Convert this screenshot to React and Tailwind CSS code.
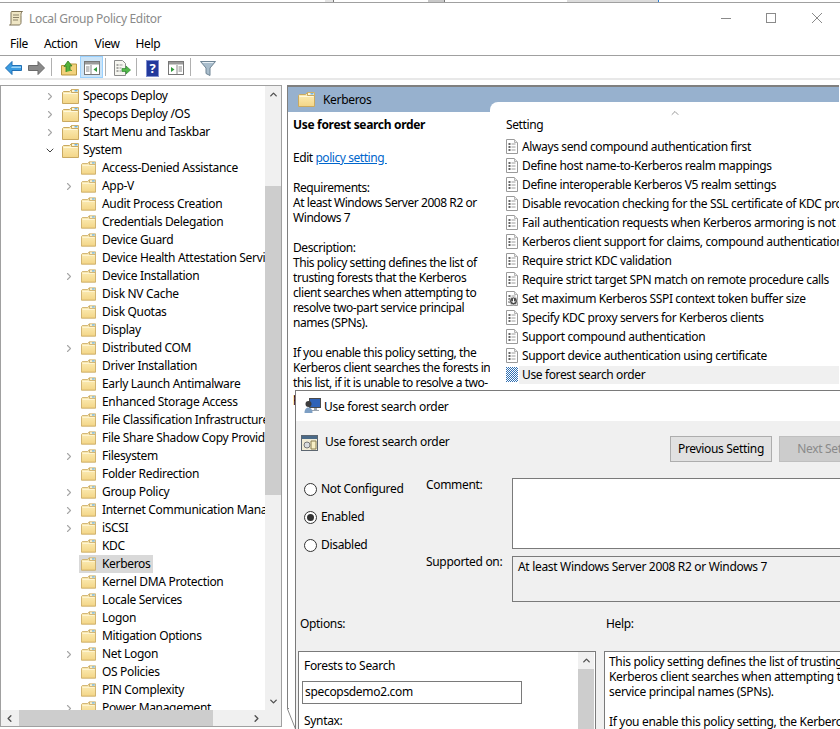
import { ChevronRight, ChevronDown, ChevronUp, ChevronLeft } from 'lucide-react'

const TREE = [
  { label: 'Specops Deploy', level: 1, arrow: 'right' },
  { label: 'Specops Deploy /OS', level: 1, arrow: 'right' },
  { label: 'Start Menu and Taskbar', level: 1, arrow: 'right' },
  { label: 'System', level: 1, arrow: 'down' },
  { label: 'Access-Denied Assistance', level: 2 },
  { label: 'App-V', level: 2, arrow: 'right' },
  { label: 'Audit Process Creation', level: 2 },
  { label: 'Credentials Delegation', level: 2 },
  { label: 'Device Guard', level: 2 },
  { label: 'Device Health Attestation Service', level: 2 },
  { label: 'Device Installation', level: 2, arrow: 'right' },
  { label: 'Disk NV Cache', level: 2 },
  { label: 'Disk Quotas', level: 2 },
  { label: 'Display', level: 2 },
  { label: 'Distributed COM', level: 2, arrow: 'right' },
  { label: 'Driver Installation', level: 2 },
  { label: 'Early Launch Antimalware', level: 2 },
  { label: 'Enhanced Storage Access', level: 2 },
  { label: 'File Classification Infrastructure', level: 2 },
  { label: 'File Share Shadow Copy Provider', level: 2 },
  { label: 'Filesystem', level: 2, arrow: 'right' },
  { label: 'Folder Redirection', level: 2 },
  { label: 'Group Policy', level: 2, arrow: 'right' },
  { label: 'Internet Communication Management', level: 2, arrow: 'right' },
  { label: 'iSCSI', level: 2, arrow: 'right' },
  { label: 'KDC', level: 2 },
  { label: 'Kerberos', level: 2, selected: true },
  { label: 'Kernel DMA Protection', level: 2 },
  { label: 'Locale Services', level: 2 },
  { label: 'Logon', level: 2 },
  { label: 'Mitigation Options', level: 2 },
  { label: 'Net Logon', level: 2, arrow: 'right' },
  { label: 'OS Policies', level: 2 },
  { label: 'PIN Complexity', level: 2 },
  { label: 'Power Management', level: 2, arrow: 'right' },
]

const SETTINGS = [
  'Always send compound authentication first',
  'Define host name-to-Kerberos realm mappings',
  'Define interoperable Kerberos V5 realm settings',
  'Disable revocation checking for the SSL certificate of KDC proxy servers',
  'Fail authentication requests when Kerberos armoring is not ...',
  'Kerberos client support for claims, compound authentication and Kerberos armoring',
  'Require strict KDC validation',
  'Require strict target SPN match on remote procedure calls',
  'Set maximum Kerberos SSPI context token buffer size',
  'Specify KDC proxy servers for Kerberos clients',
  'Support compound authentication',
  'Support device authentication using certificate',
  'Use forest search order',
]

const DESCRIPTION = [
  ['Requirements:', 'At least Windows Server 2008 R2 or', 'Windows 7'],
  [
    'Description:',
    'This policy setting defines the list of',
    'trusting forests that the Kerberos',
    'client searches when attempting to',
    'resolve two-part service principal',
    'names (SPNs).',
  ],
  [
    'If you enable this policy setting, the',
    'Kerberos client searches the forests in',
    'this list, if it is unable to resolve a two-',
    'part service principal name.',
  ],
]

function Folder({ small }) {
  return (
    <svg width={small ? 15 : 17} height={small ? 14 : 15} viewBox="0 0 17 15" className="shrink-0">
      <defs>
        <linearGradient id="folderFill" x1="0" y1="0" x2="0" y2="1">
          <stop offset="0" stopColor="#fdf0bd" />
          <stop offset="1" stopColor="#f3d586" />
        </linearGradient>
      </defs>
      <path d="M9.5 0.5h7v3h-7z" fill="#fdf6d8" stroke="#cfb16a" />
      <path d="M12.5 1h3v1.5h-3z" fill="#6fb5e6" />
      <path d="M0.5 3.5l1-1h6l2-2v3h7v11h-16z" fill="url(#folderFill)" stroke="#c9a961" />
      <path d="M1.5 4.5h14" stroke="#fff8dc" />
    </svg>
  )
}

function PolicyIcon({ kind }) {
  if (kind === 'selected') {
    return (
      <svg width="12" height="15" viewBox="0 0 12 15" className="shrink-0">
        <defs>
          <pattern id="dither" width="2" height="2" patternUnits="userSpaceOnUse">
            <rect width="2" height="2" fill="#ffffff" />
            <rect width="1" height="1" fill="#2f6fb3" />
            <rect x="1" y="1" width="1" height="1" fill="#2f6fb3" />
          </pattern>
        </defs>
        <rect width="12" height="15" fill="url(#dither)" />
      </svg>
    )
  }
  return (
    <svg width="12" height="15" viewBox="0 0 12 15" className="shrink-0">
      <path d="M0.5 0.5h8l3 3v11h-11z" fill="#fff" stroke="#9a9a9a" />
      <path d="M8.5 0.5v3h3" fill="#e8e8e8" stroke="#b5b5b5" />
      <path d="M2.5 5h2M2.5 8h2M2.5 11h2" stroke="#333" strokeWidth="1.4" />
      <path d="M5.5 5h4M5.5 8h4M5.5 11h4" stroke="#9a9a9a" />
      {kind === 'down' ? (
        <>
          <circle cx="7.5" cy="10" r="4" fill="#4a4a4a" stroke="#d0d0d0" />
          <path d="M7.5 7.5v4M5.5 9.8l2 2.2 2-2.2" stroke="#fff" fill="none" />
        </>
      ) : null}
    </svg>
  )
}

function ToolbarIcons() {
  return (
    <div className="flex items-center h-[22px] pl-[5px]">
      <svg width="17" height="14" viewBox="0 0 17 14" className="mt-[2px]">
        <path d="M7 0.5L0.5 7 7 13.5V9.5h9.5v-5H7z" fill="#3a9be0" stroke="#1f6fb5" />
        <path d="M7 5.5h9v1.5H6z" fill="#9bd4f7" />
      </svg>
      <svg width="17" height="14" viewBox="0 0 17 14" className="ml-[6px] mt-[2px]">
        <path d="M10 0.5L16.5 7 10 13.5V9.5H0.5v-5H10z" fill="#8a8a8a" stroke="#6a6a6a" />
      </svg>
      <div className="w-px h-[18px] bg-[#b0b0b0] ml-[6px]" />
      <svg width="16" height="16" viewBox="0 0 16 16" className="ml-[9px] mt-[2px]">
        <path d="M0.5 5.5h6l1-1.5h8v11h-15z" fill="#f2d27c" stroke="#b8963f" />
        <path d="M5 12V6L3 6.5 7 1l4 5-2-.2V9c0 1 1 1.5 2 1.5" fill="#53b23a" stroke="#2f7d22" strokeWidth="0.8" />
      </svg>
      <div className="ml-[3px] w-[23px] h-[22px] pt-[2px] bg-[#cce4f7] border border-[#99d1ff] flex items-center justify-center">
        <svg width="16" height="14" viewBox="0 0 16 14">
          <rect x="0.5" y="0.5" width="15" height="13" fill="#fff" stroke="#777" />
          <rect x="1" y="1" width="14" height="2.5" fill="#9a9a9a" />
          <path d="M7 4v9" stroke="#888" />
          <path d="M2 6h3.5M2 8h3.5M2 10h3.5" stroke="#888" />
          <path d="M13 6v5L9.5 8.5z" fill="#2f9a3a" />
        </svg>
      </div>
      <div className="w-px h-[18px] bg-[#b0b0b0] ml-[2px]" />
      <svg width="17" height="16" viewBox="0 0 17 16" className="ml-[8px] mt-[2px]">
        <path d="M0.5 0.5h8l3 3v12h-11z" fill="#f6f6f0" stroke="#8a8a8a" />
        <path d="M2.5 5h2M2.5 8h2M2.5 11h2" stroke="#555" />
        <path d="M5.5 5h3M5.5 8h2M5.5 11h2" stroke="#999" />
        <path d="M8 8.5h4V6l4.5 4-4.5 4v-2.5H8z" fill="#52b84a" stroke="#2f8a30" strokeWidth="0.7" />
      </svg>
      <div className="w-px h-[18px] bg-[#b0b0b0] ml-[5px]" />
      <div className="ml-[9px] mt-[2px] w-[13px] h-[17px] bg-[#22399c] border border-[#7f8fd0] flex items-center justify-center text-white text-[13px] font-bold leading-none">
        ?
      </div>
      <svg width="16" height="14" viewBox="0 0 16 14" className="ml-[9px] mt-[2px]">
        <rect x="0.5" y="0.5" width="15" height="13" fill="#fff" stroke="#777" />
        <rect x="1" y="1" width="14" height="2.5" fill="#9a9a9a" />
        <path d="M9 4v9" stroke="#888" />
        <path d="M10.5 6h3.5M10.5 8h3.5M10.5 10h3.5" stroke="#888" />
        <path d="M3 6v5l3.5-2.5z" fill="#2f9a3a" />
      </svg>
      <div className="w-px h-[18px] bg-[#b0b0b0] ml-[6px]" />
      <svg width="16" height="15" viewBox="0 0 16 15" className="ml-[9px] mt-[2px]">
        <path d="M0.5 0.5h15L10 7v7.5l-4-2V7z" fill="#a9bdcc" stroke="#6f8494" />
        <path d="M2.5 1.5h11" stroke="#e6eef4" />
      </svg>
    </div>
  )
}

function TreeRow({ item }) {
  const indent = item.level === 1 ? 'pl-[43px]' : 'pl-[62px]'
  return (
    <div className={`flex items-center h-[18px] shrink-0 whitespace-nowrap ${indent}`}>
      <span className="w-[12px] h-[14px] flex items-center justify-center shrink-0">
        {item.arrow === 'right' ? <ChevronRight size={13} strokeWidth={2.2} className="text-[#a6a6a6]" /> : null}
        {item.arrow === 'down' ? <ChevronDown size={13} strokeWidth={2} className="text-[#404040]" /> : null}
      </span>
      <span className={`flex items-center h-[18px] ml-[4px] pl-[2px] ${item.selected ? 'bg-[#d9d9d9]' : ''}`}>
        <Folder small={item.level === 2} />
        <span className={item.level === 1 ? 'ml-[4px] pr-[3px]' : 'ml-[6px] pr-[3px]'}>{item.label}</span>
      </span>
    </div>
  )
}

function Radio({ label, checked }) {
  return (
    <div className="flex items-center h-[28px]">
      <span className="w-[13px] h-[13px] rounded-full border border-[#333] bg-white flex items-center justify-center">
        {checked ? <span className="w-[7px] h-[7px] rounded-full bg-[#333]" /> : null}
      </span>
      <span className="ml-[4px]">{label}</span>
    </div>
  )
}

function PolicyDialog() {
  return (
    <div className="absolute left-[295px] top-[390px] w-[620px] h-[400px] bg-[#f0f0f0] border border-[#7a7a7a]">
      <div className="flex items-center h-[30px] bg-white pl-[8px]">
        <svg width="17" height="16" viewBox="0 0 17 16">
          <rect x="5.5" y="0.5" width="11" height="9" fill="#2f63b8" stroke="#4a4a4a" />
          <path d="M10 10h3v2h2v1H8v-1h2z" fill="#9aa4b0" />
          <circle cx="4.5" cy="6" r="3" fill="#3d3d3d" />
          <path d="M0.5 15c0-4 2-5.5 4-5.5s4 1.5 4 5.5z" fill="#7d9fc4" />
        </svg>
        <span className="ml-[3px] pt-[2px]">Use forest search order</span>
      </div>

      <div className="flex h-[57px] pt-[15px]">
        <div className="flex w-[374px] pl-[5px] shrink-0 whitespace-nowrap">
          <svg width="17" height="17" viewBox="0 0 17 17" className="-mt-px shrink-0">
            <rect x="0.5" y="0.5" width="16" height="15" fill="#f1ecd6" stroke="#5c6670" />
            <rect x="1" y="1" width="15" height="3" fill="#4a6a88" />
            <circle cx="6" cy="10" r="3" fill="#d8dce0" stroke="#777" />
            <path d="M10 6h5v8h-5z" fill="#f7efc6" stroke="#8a7f50" />
          </svg>
          <span className="ml-[7px] -mt-[3px] leading-[18px]">Use forest search order</span>
        </div>
        <button className="w-[102px] h-[26px] bg-[#e1e1e1] border border-[#adadad] shrink-0">
          Previous Setting
        </button>
        <button className="ml-[7px] w-[102px] h-[26px] bg-[#cccccc] border border-[#bfbfbf] text-[#8a8a8a] shrink-0 text-center">
          Next Setting
        </button>
      </div>

      <div className="flex h-[124px]">
        <div className="w-[130px] pl-[8px] shrink-0 -mt-[3px]">
          <Radio label="Not Configured" />
          <Radio label="Enabled" checked />
          <Radio label="Disabled" />
        </div>
        <div className="grid grid-cols-[86px_1fr] gap-y-[7px] grid-rows-[71px_46px]">
          <span className="leading-[14px]">Comment:</span>
          <div className="w-[420px] bg-white border border-[#7a7a7a]" />
          <span className="leading-[14px] -mt-px">Supported on:</span>
          <div className="w-[420px] bg-[#f0f0f0] border border-[#7a7a7a] pl-[5px] pt-[2px] leading-[16px]">
            At least Windows Server 2008 R2 or Windows 7
          </div>
        </div>
      </div>

      <div className="flex h-[49px] pt-[14px] leading-[16px]">
        <span className="pl-[4px] w-[310px]">Options:</span>
        <span>Help:</span>
      </div>

      <div className="flex">
        <div className="ml-[2px] w-[298px] h-[120px] shrink-0 bg-white border border-[#7a7a7a] flex">
          <div className="flex-1 pl-[3px] min-w-0">
            <p className="pl-[2px] pt-[6px] leading-[16px]">Forests to Search</p>
            <div className="mt-[7px] w-[220px] h-[23px] border border-[#7a7a7a] pl-[2px] leading-[20px]">
              specopsdemo2.com
            </div>
            <p className="pl-[2px] mt-[9px] leading-[16px]">Syntax:</p>
          </div>
          <div className="w-[16px] mr-px bg-[#f0f0f0] flex flex-col items-center">
            <span className="h-[17px] flex items-center">
              <ChevronUp size={11} strokeWidth={3} className="text-[#505050]" />
            </span>
            <div className="w-full flex-1 bg-[#cdcdcd]" />
          </div>
        </div>
        <div className="ml-[8px] w-[300px] h-[120px] shrink-0 bg-white border border-[#7a7a7a] pl-[4px] pt-[2px] leading-[15px] whitespace-nowrap overflow-hidden">
          <p>This policy setting defines the list of trusting forests that the</p>
          <p>Kerberos client searches when attempting to resolve two-part</p>
          <p>service principal names (SPNs).</p>
          <p className="mt-[15px]">If you enable this policy setting, the Kerberos client searches</p>
        </div>
      </div>
    </div>
  )
}

export default function App() {
  return (
    <div
      className="relative w-[840px] h-[729px] overflow-hidden bg-white text-[12px] leading-[16px] text-black tracking-[-0.32px]"
      style={{ fontFamily: '"Noto Sans", sans-serif' }}
    >
      <div className="flex h-[2px]">
        <div className="w-[325px]" />
        <div className="w-[9px] bg-[#e4e4e4] border-r border-[#777]" />
        <div className="w-[94px]" />
        <div className="w-[17px] bg-[#c8c8c8] border-r border-[#777]" />
        <div className="w-[122px]" />
        <div className="w-[92px] bg-[#dcdcdc] border-r border-[#2a7fd6]" />
      </div>
      <div className="h-px bg-[#a0a0a0]" />

      <div className="flex items-center h-[30px] pl-[8px]">
        <svg width="16" height="16" viewBox="0 0 16 16">
          <path d="M3.5 1.5h11c-1.5 1-1.5 2-1.5 4v7c0 1.5-1 2.5-2 2.5H1.5c1 0 1.5-1 1.5-2V4c0-1.5 0-2 .5-2.5z" fill="#efe6c4" stroke="#7f7458" />
          <path d="M5 5h6M5 7.5h6M5 10h5" stroke="#8b8268" />
        </svg>
        <span className="ml-[5px] pt-[2px] text-[#8a8a8a]">Local Group Policy Editor</span>
        <div className="ml-auto flex items-center pr-[18px] text-[#8a8a8a]">
          <div className="w-[10px] h-px bg-[#8a8a8a]" />
          <div className="ml-[35px] w-[10px] h-[10px] border border-[#8a8a8a]" />
          <svg width="10" height="10" viewBox="0 0 10 10" className="ml-[36px]">
            <path d="M0 0l10 10M10 0L0 10" stroke="#8a8a8a" />
          </svg>
        </div>
      </div>

      <div className="flex items-center h-[23px] border-b border-[#a0a0a0]">
        <span className="ml-[10px]">File</span>
        <span className="ml-[16px]">Action</span>
        <span className="ml-[17px]">View</span>
        <span className="ml-[16px]">Help</span>
      </div>

      <ToolbarIcons />
      <div className="h-[2px] bg-[#e8e8e8]" />

      <div className="flex mt-[5px] h-[642px]">
        <div className="w-[282px] h-full border border-[#a0a0a0] bg-white flex flex-col shrink-0">
          <div className="flex flex-1 min-h-0">
            <div className="w-[264px] pt-px overflow-hidden flex flex-col">
              {TREE.map(item => (
                <TreeRow key={item.label} item={item} />
              ))}
            </div>
            <div className="w-[16px] bg-[#f0f0f0] flex flex-col items-center">
              <span className="h-[17px] flex items-center">
                <ChevronUp size={11} strokeWidth={3} className="text-[#505050]" />
              </span>
              <div className="w-full mt-[83px] h-[309px] bg-[#cdcdcd]" />
              <span className="mt-auto h-[17px] flex items-center">
                <ChevronDown size={11} strokeWidth={3} className="text-[#505050]" />
              </span>
            </div>
          </div>
          <div className="h-[16px] bg-[#f0f0f0] flex items-center">
            <span className="w-[17px] flex justify-center">
              <ChevronLeft size={11} strokeWidth={3} className="text-[#505050]" />
            </span>
            <div className="w-[194px] h-full bg-[#cdcdcd] ml-px" />
            <span className="ml-auto w-[30px] flex justify-start">
              <ChevronRight size={11} strokeWidth={3} className="text-[#505050]" />
            </span>
          </div>
        </div>

        <div className="ml-[5px] w-[552px] h-[623px] border-l border-t-2 border-[#7f7f7f] bg-white flex flex-col shrink-0">
          <div className="flex items-center h-[25px] bg-[#97b1ce] pl-[10px] shrink-0">
            <Folder />
            <span className="ml-[8px]">Kerberos</span>
          </div>
          <div className="flex flex-1 min-h-0">
            <div className="w-[202px] pl-[5px] shrink-0 leading-[15px] whitespace-nowrap tracking-[-0.44px]">
              <p className="pt-[5px] font-bold tracking-[-0.32px]">Use forest search order</p>
              <p className="mt-[18px]">
                Edit <span className="text-[#0066cc] underline">policy setting&nbsp;</span>
              </p>
              {DESCRIPTION.map(block => (
                <div key={block[0]} className="mt-[15px]">
                  {block.map(line => (
                    <p key={line}>{line}</p>
                  ))}
                </div>
              ))}
            </div>
            <div className="relative flex-1 min-w-0 -mt-[10px] bg-white rounded-tl-[8px] overflow-hidden pt-[15px] pl-[16px] tracking-[-0.37px]">
              <ChevronUp size={12} strokeWidth={1.2} className="absolute left-[179px] top-[5px] text-[#555]" />
              <p className="h-[16px] mb-[4px] leading-[16px]">Setting</p>
              {SETTINGS.map((name, i) => {
                const selected = i === SETTINGS.length - 1
                return (
                  <div key={name} className="flex items-center h-[19px] whitespace-nowrap">
                    <PolicyIcon kind={selected ? 'selected' : i === 8 ? 'down' : 'list'} />
                    <span className={`ml-px pl-[3px] h-[18px] flex-1 leading-[18px] ${selected ? 'bg-[#f0f0f0]' : ''}`}>
                      {name}
                    </span>
                  </div>
                )
              })}
            </div>
          </div>
        </div>
      </div>

      <svg width="9" height="21" viewBox="0 0 9 21" className="absolute left-[287px] top-[708px]">
        <path d="M0.5 0v1L8.5 21M0 0.5h2" stroke="#8a8a8a" fill="none" />
      </svg>

      <PolicyDialog />
    </div>
  )
}
